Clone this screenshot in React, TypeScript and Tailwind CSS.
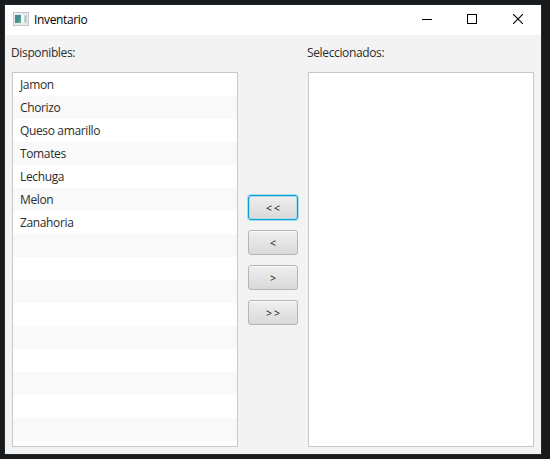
import React from "react";

const items = ["Jamon", "Chorizo", "Queso amarillo", "Tomates", "Lechuga", "Melon", "Zanahoria"];
const ROW_COUNT = 17;

function TitleBar() {
  return (
    <header className="flex h-[30px] shrink-0 items-center bg-white pl-2">
      <svg className="mb-[2px]" width="16" height="14" viewBox="0 0 16 14" shapeRendering="crispEdges">
        <defs>
          <linearGradient id="pane" x1="0" y1="0" x2="1" y2="1">
            <stop offset="0" stopColor="#4a7fae" />
            <stop offset="0.5" stopColor="#479088" />
            <stop offset="1" stopColor="#62b795" />
          </linearGradient>
        </defs>
        <rect x="0" y="0" width="16" height="14" fill="#c3c6cb" />
        <rect x="1" y="1" width="14" height="12" fill="#e9ebef" />
        <rect x="2" y="3" width="6" height="8" fill="url(#pane)" />
        <rect x="8" y="3" width="3" height="8" fill="#f8f8f8" />
        <rect x="11" y="3" width="3" height="8" fill="#c9d2d3" />
        <rect x="12" y="4" width="1" height="5" fill="#9fcdb5" />
      </svg>
      <h1 className="mb-px ml-[5px] text-black">Inventario</h1>
      <div className="ml-auto flex h-full">
        <button aria-label="Minimizar" className="flex w-[46px] items-center justify-center">
          <svg width="10" height="10" shapeRendering="crispEdges">
            <rect y="4" width="10" height="1" />
          </svg>
        </button>
        <button aria-label="Maximizar" className="flex w-[45px] items-center justify-center pr-px pb-[2px]">
          <svg width="10" height="10" shapeRendering="crispEdges">
            <rect x="0.5" y="0.5" width="9" height="9" fill="none" stroke="#000" />
          </svg>
        </button>
        <button aria-label="Cerrar" className="flex w-[46px] items-center justify-center pb-[2px]">
          <svg width="10" height="10">
            <path d="M0 0L10 10M10 0L0 10" stroke="#000" strokeWidth="1.1" />
          </svg>
        </button>
      </div>
    </header>
  );
}

function ListView({ rows }: { rows?: string[] }) {
  return (
    <ul className="h-[375px] w-[226px] overflow-hidden border border-[#c8c8c8] bg-white">
      {rows &&
        Array.from({ length: ROW_COUNT }, (_, i) => (
          <li key={i} className="flex h-[23px] items-center pl-[7px] odd:bg-white even:bg-[#f9f9f9]">
            <span>{rows[i]}</span>
          </li>
        ))}
    </ul>
  );
}

function MoveButton({ label, focused = false }: { label: string; focused?: boolean }) {
  return (
    <button
      className={
        "flex h-[25px] w-[50px] items-center justify-center rounded-[3px] border bg-linear-to-b from-[#efefef] to-[#d9d9d9] pt-px pl-[2px] text-[10.5px] text-[#111] tracking-[2px] " +
        (focused
          ? "border-[#039ed3] shadow-[0_0_0_1px_#a5dcef,inset_0_0_0_1px_#b5dceb]"
          : "border-[#b5b5b5] shadow-[inset_0_1px_0_#fafafa]")
      }
    >
      {label}
    </button>
  );
}

export default function App() {
  return (
    <div className="h-[459px] w-[550px] bg-[#171b1e] pt-[5px] pl-[5px] font-['Open_Sans','Noto_Sans',sans-serif] text-[12px] leading-[17px] tracking-[-0.36px]">
      <main className="flex h-[449px] w-[536px] flex-col bg-[#f3f3f3] text-[#2c2c2c] shadow-[0_0_0_1px_#25292c]">
        <TitleBar />
        <div className="flex pt-[9px] pl-[7px]">
          <section className="w-[226px]">
            <h2 className="-ml-px mb-[11px]">Disponibles:</h2>
            <ListView rows={items} />
          </section>
          <nav className="flex w-[70px] flex-col items-center gap-[10px] pt-[151px]">
            <MoveButton label="<<" focused />
            <MoveButton label="<" />
            <MoveButton label=">" />
            <MoveButton label=">>" />
          </nav>
          <section className="w-[226px]">
            <h2 className="-ml-px mb-[11px]">Seleccionados:</h2>
            <ListView />
          </section>
        </div>
      </main>
    </div>
  );
}
